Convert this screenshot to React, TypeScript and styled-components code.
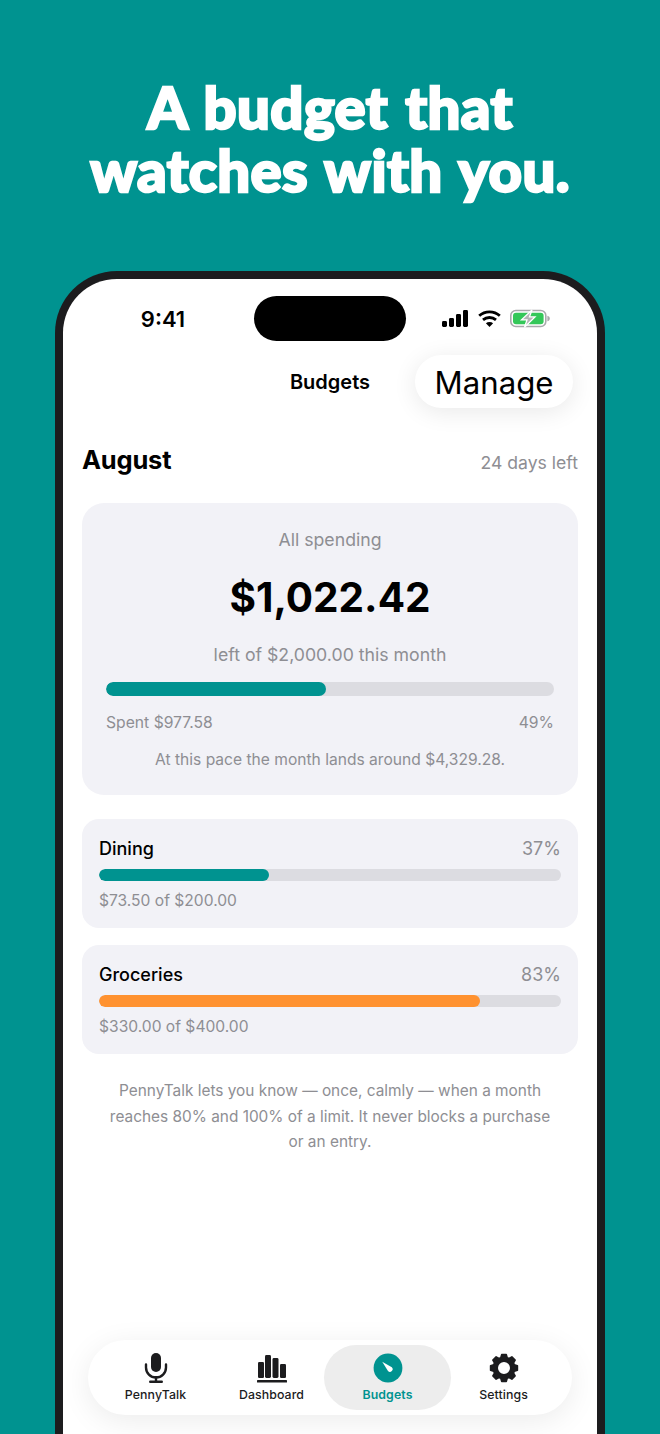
import React from "react";
import styled, { createGlobalStyle } from "styled-components";

const Global = createGlobalStyle`
  html, body { margin: 0; padding: 0; background: #009390; }
  body { font-family: Inter, "Liberation Sans", sans-serif; -webkit-font-smoothing: antialiased; }
`;

const Page = styled.div`
  width: 660px; height: 1434px; overflow: hidden; background: #009390;
  display: flex; flex-direction: column; align-items: center;
`;
const Headline = styled.h1`
  margin: 75px 0 70px; width: 100%; text-align: center; color: #fff;
  font-family: Lato, sans-serif; font-weight: 900; font-size: 58px; line-height: 63px;
  letter-spacing: 0.4px; word-spacing: 3px; -webkit-text-stroke: 2.4px #fff; paint-order: stroke fill;
`;
const Phone = styled.div`
  width: 550px; height: 1163px; box-sizing: border-box; flex: none;
  background: #1c1c1e; border-radius: 62px 62px 0 0; padding: 8px 8px 0;
`;
const Screen = styled.div`
  height: 100%; background: #fff; border-radius: 54px 54px 0 0;
  display: flex; flex-direction: column; overflow: hidden;
`;
const StatusBar = styled.div`
  display: grid; grid-template-columns: 1fr 152px 1fr; align-items: center;
  padding-top: 17px; height: 45px;
`;
const Clock = styled.div`
  font-size: 22px; font-weight: 600; color: #000; text-align: center; padding-left: 9px;
`;
const Island = styled.div`height: 45px; border-radius: 23px; background: #000;`;
const StatusIcons = styled.div`
  display: flex; align-items: center; gap: 10px; padding-left: 36px;
`;
const BatterySvg = styled.svg`margin-left: -1px; flex: none;`;
const NavBar = styled.div`
  display: grid; grid-template-columns: 1fr auto 1fr; align-items: center;
  margin-top: 14px; padding: 0 24px;
`;
const NavTitle = styled.div`font-size: 20px; font-weight: 600; color: #000;`;
const ManageButton = styled.div`
  justify-self: end; width: 158px; height: 53px; border-radius: 27px; background: #fff;
  box-shadow: 0 4px 24px rgba(0,0,0,0.09);
  display: flex; align-items: center; justify-content: center;
  font-size: 31.2px; color: #000; font-weight: 400; padding-top: 2px; box-sizing: border-box;
`;
const Content = styled.div`
  padding: 0 19px; display: flex; flex-direction: column;
`;
const MonthRow = styled.div`
  display: flex; justify-content: space-between; align-items: baseline;
  margin-top: 36px;
`;
const Month = styled.div`font-size: 25.5px; font-weight: 700; color: #000; letter-spacing: -0.2px;`;
const DaysLeft = styled.div`font-size: 17.6px; color: #8e8e93;`;
const SummaryCard = styled.div`
  margin-top: 28px; background: #f2f2f7; border-radius: 22px; height: 292px; box-sizing: border-box;
  padding: 26px 24px 0; display: flex; flex-direction: column; align-items: stretch;
`;
const Muted = styled.div<{ $size?: number; $top?: number }>`
  font-size: ${(p) => p.$size ?? 15.6}px; line-height: ${(p) => ((p.$size ?? 16) >= 17 ? 22 : 19)}px; color: #8e8e93; text-align: center;
  margin-top: ${(p) => p.$top ?? 0}px;
`;
const Amount = styled.div`
  font-size: 40.5px; line-height: 50px; font-weight: 700; color: #000; text-align: center; margin-top: 22px;
`;
const Track = styled.div<{ $h: number; $top: number }>`
  height: ${(p) => p.$h}px; border-radius: ${(p) => p.$h / 2}px; background: #dcdce1;
  margin-top: ${(p) => p.$top}px; overflow: hidden;
`;
const Fill = styled.div<{ $color: string }>`
  height: 100%; border-radius: inherit; background: ${(p) => p.$color};
`;
const SpentRow = styled.div`
  display: flex; justify-content: space-between; margin-top: 17px;
  font-size: 15.7px; line-height: 19px; color: #8e8e93;
`;
const CategoryList = styled.div`display: flex; flex-direction: column; gap: 17px; margin-top: 24px;`;
const CategoryCard = styled.div`
  background: #f2f2f7; border-radius: 17px; height: 109px; box-sizing: border-box; padding: 18px 17px 0;
`;
const CategoryHead = styled.div`display: flex; justify-content: space-between; align-items: baseline;`;
const CategoryName = styled.div`font-size: 18px; line-height: 23px; font-weight: 500; color: #000;`;
const CategoryPct = styled.div`font-size: 18px; line-height: 23px; color: #8e8e93;`;
const CategorySub = styled.div`font-size: 15.6px; line-height: 19px; color: #8e8e93; margin-top: 10px;`;
const Note = styled.p`
  margin: 24px 25px 0; text-align: center; font-size: 15.4px; line-height: 25.5px; color: #8e8e93;
`;
const TabBar = styled.div`
  margin: auto 25px 19px; height: 75px; border-radius: 38px; background: #fff;
  box-shadow: 0 6px 30px rgba(0,0,0,0.08); padding-right: 1px;
  display: flex; align-items: center; justify-content: center;
`;
const Tab = styled.div<{ $active?: boolean }>`
  width: ${(p) => (p.$active ? 127 : 116)}px;
  margin: 0 ${(p) => (p.$active ? -5.5 : 0)}px;
  height: 65px; border-radius: 33px; position: relative;
  background: ${(p) => (p.$active ? "#ededed" : "transparent")};
  color: ${(p) => (p.$active ? "#009390" : "#1c1c1e")};
  font-weight: ${(p) => (p.$active ? 600 : 500)};
  display: flex; flex-direction: column; align-items: center; justify-content: flex-end;
  padding-bottom: 8px; box-sizing: border-box; gap: 3px;
`;
const TabLabel = styled.div`font-size: 12.3px; line-height: 15px; letter-spacing: 0.1px;`;
const TabIcon = styled.svg`width: 32px; height: 32px; display: block;`;

const Signal = () => (
  <svg width="26" height="17" viewBox="0 0 26 17" fill="#000">
    <rect x="0" y="11" width="5" height="6" rx="1.4" />
    <rect x="7" y="8" width="5" height="9" rx="1.4" />
    <rect x="14" y="4" width="5" height="13" rx="1.4" />
    <rect x="21" y="0" width="5" height="17" rx="1.4" />
  </svg>
);
const Wifi = () => (
  <svg width="23" height="17" viewBox="0 0 23 17" fill="none" stroke="#000" strokeWidth="2.8">
    <path d="M1.2 5.8C7 .6 16 .6 21.8 5.8" />
    <path d="M5 9.9c3.7-3.2 9.3-3.2 13 0" />
    <path d="M11.5 17 7.9 13.3c2-1.7 5.2-1.7 7.2 0Z" fill="#000" stroke="none" />
  </svg>
);
const Battery = () => (
  <BatterySvg width="40" height="19" viewBox="0 0 40 19">
    <rect x="0.8" y="1.5" width="35" height="16" rx="5" fill="none" stroke="#a9a9ac" strokeWidth="1.6" />
    <rect x="3" y="3.7" width="30.6" height="11.6" rx="3" fill="#34c759" />
    <path d="M37.4 6.7c1.6.4 2.4 1.4 2.4 2.8s-.8 2.4-2.4 2.8Z" fill="#a9a9ac" />
    <path d="M22 1 11.5 10.9H17l-2.5 7.3L25 7.9h-5.5Z" fill="#b4b4b7" stroke="#fff" strokeWidth="1.3" />
  </BatterySvg>
);

const MicIcon = () => (
  <TabIcon viewBox="0 0 32 32" fill="currentColor">
    <rect x="11" y="1" width="10" height="19" rx="5" />
    <path d="M6 12.5v3a10 10 0 0 0 20 0v-3" fill="none" stroke="currentColor" strokeWidth="2.4" strokeLinecap="round" />
    <rect x="14.8" y="24" width="2.4" height="6" />
    <rect x="9" y="28.6" width="14" height="2.4" rx="1.2" />
  </TabIcon>
);
const ChartIcon = () => (
  <TabIcon viewBox="0 0 32 32" fill="currentColor">
    <rect x="2" y="10" width="6" height="16" rx="1.2" />
    <rect x="9" y="3" width="6" height="23" rx="1.4" />
    <rect x="16.5" y="6" width="6" height="20" rx="1.4" />
    <rect x="24" y="12" width="6" height="14" rx="1.2" />
    <rect x="1" y="28" width="30" height="2.6" rx="0.6" />
  </TabIcon>
);
const GaugeIcon = () => (
  <TabIcon viewBox="0 0 32 32">
    <circle cx="16" cy="16" r="14.4" fill="currentColor" />
    <path d="M10.2 9.8 19.8 15.2A2.6 2.6 0 0 1 16 19Z" fill="#fff" />
  </TabIcon>
);
const gearPath = (() => {
  const teeth = 8, cx = 16, cy = 16, ro = 13.6, ri = 10.8;
  const pts: string[] = [];
  for (let i = 0; i < teeth; i++) {
    const a = (i * 2 * Math.PI) / teeth;
    const angles: [number, number][] = [[-0.3, ri], [-0.17, ro], [0.17, ro], [0.3, ri]];
    angles.forEach(([d, r]) => {
      pts.push(`${(cx + r * Math.sin(a + d)).toFixed(2)} ${(cy - r * Math.cos(a + d)).toFixed(2)}`);
    });
  }
  return "M" + pts.join("L") + "Z";
})();
const GearIcon = () => (
  <TabIcon viewBox="0 0 32 32">
    <path d={`${gearPath}M16 9.2a6.8 6.8 0 1 0 0 13.6a6.8 6.8 0 1 0 0-13.6Z`} fill="currentColor" fillRule="evenodd" stroke="currentColor" strokeWidth="1.6" strokeLinejoin="round" />
  </TabIcon>
);

const categories = [
  { name: "Dining", pct: 37, width: 36.8, sub: "$73.50 of $200.00", color: "#009390" },
  { name: "Groceries", pct: 83, width: 82.5, sub: "$330.00 of $400.00", color: "#ff9230" },
];

export default function App() {
  return (
    <Page>
      <Global />
      <Headline>
        A budget that
        <br />
        watches with you.
      </Headline>
      <Phone>
        <Screen>
          <StatusBar>
            <Clock>9:41</Clock>
            <Island />
            <StatusIcons>
              <Signal />
              <Wifi />
              <Battery />
            </StatusIcons>
          </StatusBar>
          <NavBar>
            <span />
            <NavTitle>Budgets</NavTitle>
            <ManageButton>Manage</ManageButton>
          </NavBar>
          <Content>
            <MonthRow>
              <Month>August</Month>
              <DaysLeft>24 days left</DaysLeft>
            </MonthRow>
            <SummaryCard>
              <Muted $size={17.7}>All spending</Muted>
              <Amount>$1,022.42</Amount>
              <Muted $size={17.7} $top={21}>left of $2,000.00 this month</Muted>
              <Track $h={14} $top={16}>
                <Fill $color="#009390" style={{ width: "49%" }} />
              </Track>
              <SpentRow>
                <span>Spent $977.58</span>
                <span>49%</span>
              </SpentRow>
              <Muted $top={18}>At this pace the month lands around $4,329.28.</Muted>
            </SummaryCard>
            <CategoryList>
              {categories.map((c) => (
                <CategoryCard key={c.name}>
                  <CategoryHead>
                    <CategoryName>{c.name}</CategoryName>
                    <CategoryPct>{c.pct}%</CategoryPct>
                  </CategoryHead>
                  <Track $h={12} $top={9}>
                    <Fill $color={c.color} style={{ width: `${c.width}%` }} />
                  </Track>
                  <CategorySub>{c.sub}</CategorySub>
                </CategoryCard>
              ))}
            </CategoryList>
            <Note>
              PennyTalk lets you know — once, calmly — when a month reaches 80% and 100% of a limit. It never blocks a purchase or an entry.
            </Note>
          </Content>
          <TabBar>
            <Tab><MicIcon /><TabLabel>PennyTalk</TabLabel></Tab>
            <Tab><ChartIcon /><TabLabel>Dashboard</TabLabel></Tab>
            <Tab $active><GaugeIcon /><TabLabel>Budgets</TabLabel></Tab>
            <Tab><GearIcon /><TabLabel>Settings</TabLabel></Tab>
          </TabBar>
        </Screen>
      </Phone>
    </Page>
  );
}
